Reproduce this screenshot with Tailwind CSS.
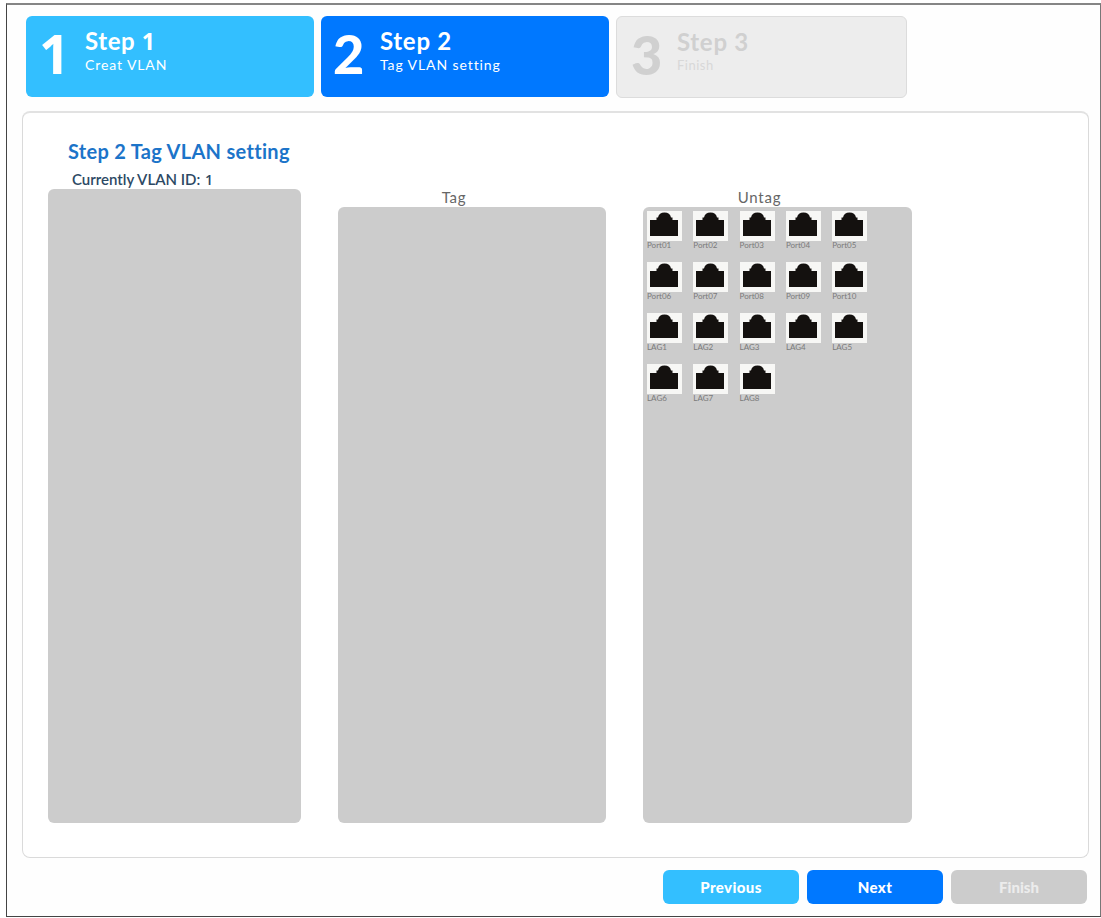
<!DOCTYPE html>
<html lang="en">
<head>
    <meta charset="UTF-8">
    <meta name="viewport" content="width=device-width, initial-scale=1.0">
    <title>Tag VLAN setting</title>
    <script src="https://cdn.jsdelivr.net/npm/@tailwindcss/browser@4"></script>
</head>
<body class="h-[918px] w-[1101px] overflow-hidden bg-white pt-[3px] pl-[6px] font-['Lato','Liberation_Sans',sans-serif] whitespace-nowrap">
    <div class="h-[914px] w-[1095px] border border-t-2 border-[#444] border-t-[#858585] border-r-[#777] bg-[#fefefe] pt-[11px] pl-[15px]">
        <!-- Wizard steps -->
        <header class="flex h-[95px] gap-[7px] pl-[4px]">
            <div class="flex h-[81px] w-[288px] rounded-md bg-[#33bfff] pl-[13px] text-white">
                <span class="w-[46px] pt-[10px] font-['Open_Sans','Lato',sans-serif] text-[54px] leading-[54px] font-bold">1</span>
                <div class="pt-[11px]">
                    <h2 class="text-[24px] leading-[28px] font-bold tracking-[0.6px]">Step <span class="font-['Open_Sans','Lato',sans-serif] text-[23px]">1</span></h2>
                    <p class="text-[14px] leading-[19px] tracking-[0.9px]">Creat VLAN</p>
                </div>
            </div>
            <div class="flex h-[81px] w-[288px] rounded-md bg-[#0078ff] pl-[12px] text-white">
                <span class="w-[47px] pt-[11px] text-[54px] leading-[54px] font-black">2</span>
                <div class="pt-[11px]">
                    <h2 class="text-[24px] leading-[28px] font-bold tracking-[0.7px]">Step 2</h2>
                    <p class="text-[14px] leading-[19px] tracking-[0.9px]">Tag VLAN setting</p>
                </div>
            </div>
            <div class="flex h-[82px] w-[291px] rounded-md border border-[#dcdcdc] bg-[#ededed] pl-[14px] text-[#d0d0d0]">
                <span class="w-[46px] pt-[11px] text-[54px] leading-[54px] font-black">3</span>
                <div class="pt-[11px]">
                    <h2 class="text-[24px] leading-[28px] font-bold tracking-[0.7px]">Step 3</h2>
                    <p class="text-[13px] leading-[19px] tracking-[0.5px] text-[#d8d8d8]">Finish</p>
                </div>
            </div>
        </header>

        <main class="h-[747px] w-[1067px] rounded-lg border border-t-2 border-[#dadada] border-t-[#e2e2e2] bg-white pt-[24px] pl-[25px]">
            <h1 class="pl-[20px] text-[20px] leading-[28px] font-bold tracking-[0.3px] text-[#1c74c9]">Step 2 Tag VLAN setting</h1>
            <div class="flex pt-px">
                <section class="w-[253px]">
                    <p class="h-[23px] pt-[2px] pl-[24px] text-[15px] leading-[22px] font-semibold text-[#2c4964]">Currently VLAN ID: <span class="pl-px font-['Open_Sans','Lato',sans-serif] text-[14px]">1</span></p>
                    <div class="h-[634px] rounded-md bg-[#ccc]"></div>
                </section>
                <section class="ml-[37px] w-[268px]">
                    <p class="h-[41px] pt-[20px] pr-[36px] text-center text-[15px] leading-[22px] tracking-[0.7px] text-[#666]">Tag</p>
                    <div class="h-[616px] rounded-md bg-[#ccc]"></div>
                </section>
                <section class="ml-[37px] w-[269px]">
                    <p class="h-[41px] pt-[20px] pr-[36px] text-center text-[15px] leading-[22px] tracking-[0.8px] text-[#666]">Untag</p>
                    <div id="untag" class="grid h-[616px] auto-rows-[51px] grid-cols-[repeat(5,46.3px)] content-start rounded-md bg-[#ccc] pt-[4px] pl-[4px]"></div>
                </section>
            </div>
        </main>

        <!-- Buttons -->
        <footer class="flex gap-[8px] pt-[12px] pl-[641px] text-[15px] font-black text-white">
            <button class="h-[34px] w-[136px] rounded-md bg-[#33bfff] tracking-[0.4px]">Previous</button>
            <button class="h-[34px] w-[136px] rounded-md bg-[#0078ff] tracking-[0.4px]">Next</button>
            <button class="h-[34px] w-[136px] rounded-md bg-[#ccc] text-[#ececec]">Finish</button>
        </footer>
    </div>

    <template id="port">
        <div>
            <svg class="block h-[30px] w-[35px]" viewBox="0 0 35 30">
                <rect width="35" height="30" fill="#f7f7f5"></rect>
                <path d="M3 9h6.500V6.500H11q1-5 6.500-5t6.500 5h1.500V9H31v16H3z" fill="#14110f"></path>
            </svg>
            <p class="text-[8px] leading-[9px] text-[#7a7a7a]"></p>
        </div>
    </template>
    <script>
        const names = ['Port01', 'Port02', 'Port03', 'Port04', 'Port05', 'Port06', 'Port07', 'Port08', 'Port09', 'Port10',
            'LAG1', 'LAG2', 'LAG3', 'LAG4', 'LAG5', 'LAG6', 'LAG7', 'LAG8'];
        const port = document.getElementById('port');
        names.forEach(name => {
            const item = port.content.cloneNode(true);
            item.querySelector('p').textContent = name;
            document.getElementById('untag').appendChild(item);
        });
    </script>
</body>
</html>
